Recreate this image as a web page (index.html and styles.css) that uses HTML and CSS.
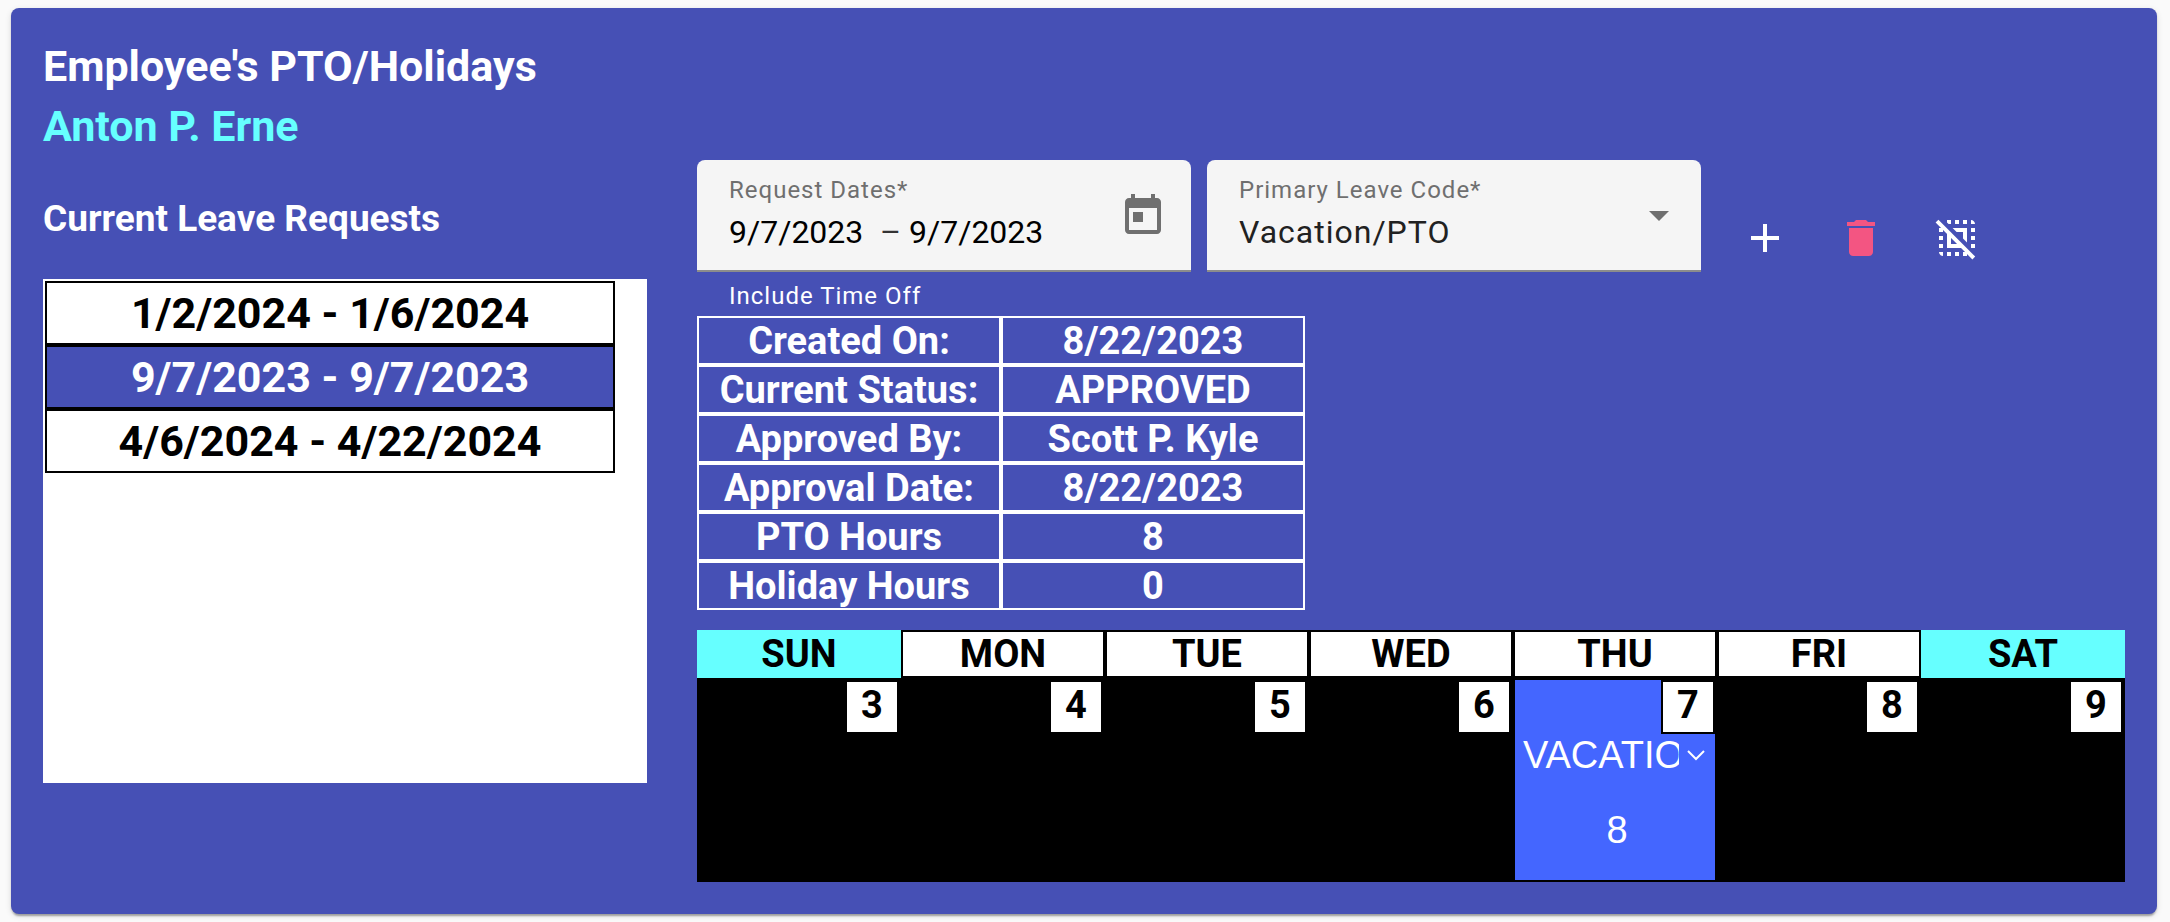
FILE: index.html
```html
<!DOCTYPE html>
<html lang="en">
<head>
<meta charset="utf-8">
<title>Employee's PTO/Holidays</title>
<link rel="stylesheet" href="styles.css">
</head>
<body>
<main class="card">
  <header>
    <h1 class="title">Employee's PTO/Holidays</h1>
    <p class="title employee">Anton P. Erne</p>
  </header>
  <div class="columns">
    <section class="requests">
      <h2 class="subtitle">Current Leave Requests</h2>
      <div class="request-list">
        <button type="button" class="request">1/2/2024 - 1/6/2024</button>
        <button type="button" class="request selected">9/7/2023 - 9/7/2023</button>
        <button type="button" class="request">4/6/2024 - 4/22/2024</button>
      </div>
    </section>
    <section class="editor">
      <div class="form-row">
        <div class="form-field">
          <div class="field-box">
            <div class="field-text">
              <label class="field-label" for="start">Request Dates*</label>
              <div class="date-range">
                <input class="date-input" id="start" type="text" value="9/7/2023">
                <span class="dash">–</span>
                <input class="date-input" type="text" value="9/7/2023" aria-label="End date">
              </div>
            </div>
            <button type="button" class="calendar-button" aria-label="Open calendar">
              <svg class="icon" viewBox="0 0 24 24"><path d="M19 3h-1V1h-2v2H8V1H6v2H5c-1.11 0-1.99.9-1.99 2L3 19c0 1.1.89 2 2 2h14c1.1 0 2-.9 2-2V5c0-1.1-.9-2-2-2zm0 16H5V8h14v11zM7 10h5v5H7z"/></svg>
            </button>
          </div>
          <p class="hint">Include Time Off</p>
        </div>
        <div class="form-field">
          <div class="field-box">
            <div class="field-text">
              <label class="field-label" for="code">Primary Leave Code*</label>
              <select class="code-select" id="code"><option>Vacation/PTO</option></select>
            </div>
            <svg class="arrow" viewBox="0 0 20 10"><path d="M0 0h20L10 10z"/></svg>
          </div>
        </div>
        <div class="actions">
          <button type="button" class="action" aria-label="Add"><svg class="icon" viewBox="0 0 24 24"><path d="M19 13h-6v6h-2v-6H5v-2h6V5h2v6h6v2z"/></svg></button>
          <button type="button" class="action warn" aria-label="Delete"><svg class="icon" viewBox="0 0 24 24"><path d="M6 19c0 1.1.9 2 2 2h8c1.1 0 2-.9 2-2V7H6v12zM19 4h-3.500l-1-1h-5l-1 1H5v2h14V4z"/></svg></button>
          <button type="button" class="action" aria-label="Deselect"><svg class="icon" viewBox="0 0 24 24"><path d="M3 13h2v-2H3v2zm0 4h2v-2H3v2zm2 4v-2H3c0 1.100.9 2 2 2zM3 9h2V7.200L4.800 7H3v2zm4 12h2v-2H7v2zM19 3v2h2c0-1.100-.9-2-2-2zM15 5h2V3h-2v2zm-4 0h2V3h-2v2zM9 3H7v1.200l.8.8H9V3zm2 18h2v-2h-2v2zm8-8h2v-2h-2v2zm0-4h2V7h-2v2zm0 8h2v-2h-2v2zm-4 4h2v-1.800l-.2-.2H15v2zM7 9.200V17h7.800l-2-2H9v-3.800l-2-2zM9.800 7l2 2H15v3.200l2 2V7H9.800zM2.700 2.900 1.300 4.300l18.400 18.400 1.400-1.400z"/></svg></button>
        </div>
      </div>
      <table class="details">
        <tr><th>Created On:</th><td>8/22/2023</td></tr>
        <tr><th>Current Status:</th><td>APPROVED</td></tr>
        <tr><th>Approved By:</th><td>Scott P. Kyle</td></tr>
        <tr><th>Approval Date:</th><td>8/22/2023</td></tr>
        <tr><th>PTO Hours</th><td>8</td></tr>
        <tr><th>Holiday Hours</th><td>0</td></tr>
      </table>
      <div class="calendar">
        <div class="weekday weekend">SUN</div>
        <div class="weekday">MON</div>
        <div class="weekday">TUE</div>
        <div class="weekday">WED</div>
        <div class="weekday">THU</div>
        <div class="weekday">FRI</div>
        <div class="weekday weekend">SAT</div>
        <div class="day"><span class="date">3</span></div>
        <div class="day"><span class="date">4</span></div>
        <div class="day"><span class="date">5</span></div>
        <div class="day"><span class="date">6</span></div>
        <div class="day leave">
          <span class="date">7</span>
          <div class="leave-code">
            <select class="leave-select" aria-label="Leave code"><option>VACATION</option></select>
            <svg class="chevron" viewBox="0 0 18 12"><path d="M1 2l8 8 8-8"/></svg>
          </div>
          <input class="hours" type="text" value="8" aria-label="Hours">
        </div>
        <div class="day"><span class="date">8</span></div>
        <div class="day"><span class="date">9</span></div>
      </div>
    </section>
  </div>
</main>
</body>
</html>
```
FILE: styles.css
```css
* { box-sizing: border-box; }

body {
  margin: 0;
  padding: 8px 13px 8px 11px;
  background: #fafafa;
  font-family: Roboto, "Liberation Sans", sans-serif;
}

button, input, select {
  margin: 0;
  padding: 0;
  border: 0;
  border-radius: 0;
  background: transparent;
  color: inherit;
  font: inherit;
}

select { appearance: none; }

.card {
  padding: 28px 32px 32px;
  border-radius: 8px;
  background: #4650b5;
  color: #fff;
  box-shadow: 0 4px 2px -2px rgba(0, 0, 0, .2), 0 2px 2px rgba(0, 0, 0, .14), 0 2px 6px rgba(0, 0, 0, .12);
}

.title {
  margin: 0;
  font-size: 43px;
  font-weight: 700;
  line-height: 60px;
}

.employee { color: #66ffff; }

.columns {
  display: grid;
  grid-template-columns: 604fr 1428fr;
  gap: 50px;
  margin-top: 4px;
}

.subtitle {
  margin: 0;
  padding: 36px 0 37px;
  font-size: 37px;
  font-weight: 700;
  line-height: 46px;
}

.request-list {
  display: flex;
  flex-direction: column;
  min-height: 504px;
  padding: 2px 32px 2px 2px;
  background: #fff;
}

.request {
  height: 64px;
  border: 2px solid #000;
  color: #000;
  font-size: 43px;
  font-weight: 700;
}

.request.selected {
  background: #4650b5;
  color: #fff;
}

.form-row {
  display: flex;
  gap: 16px;
  height: 156px;
}

.form-field { flex: 0 1 494px; }

.field-box {
  display: flex;
  align-items: center;
  height: 112px;
  padding: 2px 24px 0 32px;
  border-bottom: 2px solid #8c8c8c;
  border-radius: 8px 8px 0 0;
  background: #f5f5f5;
  color: #6f6f6f;
}

.field-text {
  display: flex;
  flex: 1;
  flex-direction: column;
  gap: 2px;
  min-width: 0;
}

.field-label {
  font-size: 24px;
  line-height: 30px;
  letter-spacing: 1px;
}

.date-range {
  display: flex;
  height: 50px;
  color: #000;
  font-size: 32px;
  line-height: 50px;
}

.date-input { width: 151px; }

.dash {
  width: 29px;
  color: #333;
}

.calendar-button { height: 48px; }

.icon {
  display: block;
  width: 48px;
  height: 48px;
  fill: currentColor;
}

.code-select {
  width: 100%;
  height: 50px;
  color: #212121;
  font-size: 32px;
  letter-spacing: 1px;
}

.arrow {
  width: 20px;
  height: 10px;
  margin-right: 8px;
  fill: currentColor;
}

.hint {
  margin: 0;
  padding: 8px 32px;
  font-size: 24px;
  line-height: 32px;
  letter-spacing: 1px;
}

.actions {
  display: flex;
  height: 156px;
}

.action {
  display: flex;
  align-items: center;
  justify-content: center;
  width: 96px;
  color: #fff;
}

.action.warn { color: #f35582; }

.details {
  width: 608px;
  border-collapse: separate;
  border-spacing: 0;
  table-layout: fixed;
  font-size: 38px;
  line-height: 44px;
  text-align: center;
}

.details th,
.details td {
  padding: 1px 0 0;
  border: 2px solid #fff;
  font-weight: 700;
}

.calendar {
  display: grid;
  grid-template-columns: repeat(7, 1fr);
  margin-top: 20px;
  color: #000;
  font-size: 38px;
}

.weekday {
  height: 48px;
  border: 2px solid #000;
  background: #fff;
  font-weight: 700;
  line-height: 45px;
  text-align: center;
}

.weekday.weekend {
  border-color: #66ffff;
  background: #66ffff;
}

.day {
  display: flex;
  flex-direction: column;
  min-width: 0;
  height: 204px;
  border: 2px solid #000;
  background: #000;
}

.date {
  align-self: flex-end;
  width: 54px;
  height: 54px;
  border: 2px solid #000;
  background: #fff;
  font-weight: 700;
  line-height: 46px;
  text-align: center;
}

.leave {
  background: #4466ff;
  color: #fff;
}

.leave .date { color: #000; }

.leave-code {
  display: flex;
  align-items: center;
  gap: 8px;
  height: 42px;
  padding: 0 10px 0 8px;
}

.leave-select {
  flex: 1;
  min-width: 0;
  height: 42px;
  font-family: "Liberation Sans", Arial, sans-serif;
}

.chevron {
  width: 18px;
  height: 12px;
  fill: none;
  stroke: currentColor;
  stroke-width: 2;
}

.hours {
  width: 100%;
  height: 44px;
  margin-top: 32px;
  padding-left: 4px;
  font-family: "Liberation Sans", Arial, sans-serif;
  text-align: center;
}
```
